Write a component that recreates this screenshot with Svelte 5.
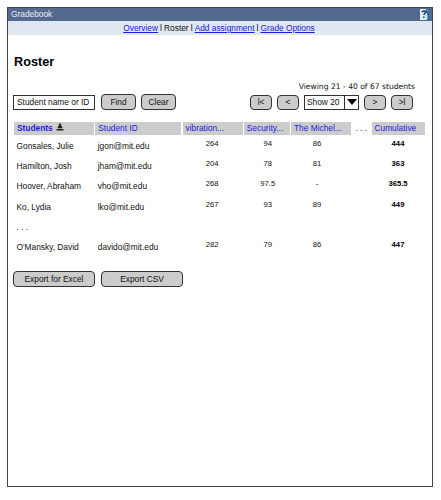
<script>
  const columns = ['Student ID', 'vibration...', 'Security...', 'The Michel...'];
  const rows = [
    ['Gonsales, Julie', 'jgon@mit.edu', '264', '94', '86', '444'],
    ['Hamilton, Josh', 'jham@mit.edu', '204', '78', '81', '363'],
    ['Hoover, Abraham', 'vho@mit.edu', '268', '97.5', '-', '365.5'],
    ['Ko, Lydia', 'lko@mit.edu', '267', '93', '89', '449'],
    ['. . .', '', '', '', '', ''],
    ["O'Mansky, David", 'davido@mit.edu', '282', '79', '86', '447']
  ];
</script>

<div class="window">
  <header>
    <span>Gradebook</span>
    <svg class="help" width="9" height="11" viewBox="0 0 9 11">
      <path d="M0 0h6l3 3v8H0z" fill="#dcebf5" />
      <path d="M6 0l3 3v8H7V4H5z" fill="#286b9e" />
      <path d="M2 3.2Q3 1.3 5 2.2Q6.3 3.3 4.4 4.8L3.9 6M3.8 7.5v1.4" fill="none" stroke="#17324f" stroke-width="1.4" />
      <path d="M5 7h3M5 9h3" stroke="#b9dcf0" stroke-width="1" />
    </svg>
  </header>
  <nav>
    <a href="#overview">Overview</a><span class="bar">l</span><span>Roster</span><span class="bar">l</span><a href="#add">Add assignment</a><span class="bar">l</span><a href="#options">Grade Options</a>
  </nav>
  <main>
    <h1>Roster</h1>
    <div class="viewing">Viewing 21 - 40 of 67 students</div>
    <div class="toolbar">
      <div class="field">Student name or ID</div>
      <button class="find">Find</button>
      <button class="clear">Clear</button>
      <div class="pager">
        <button>l&lt;</button>
        <button>&lt;</button>
        <div class="select">
          <span>Show 20</span>
          <i><svg width="10" height="6" viewBox="0 0 10 6"><path d="M0 0h10L5 6z" /></svg></i>
        </div>
        <button>&gt;</button>
        <button>&gt;l</button>
      </div>
    </div>

    <div class="row head">
      <div class="cell first">
        Students
        <svg width="8" height="8" viewBox="0 0 8 8"><path d="M4 0l1.2 1.5v1.2L6.3 4v1.2H1.7V4l1.1-1.3V1.5zM.5 5.9h7v1.6h-7z" fill="#222" /></svg>
      </div>
      {#each columns as column}
        <div class="cell">{column}</div>
      {/each}
      <div class="more">. . .</div>
      <div class="cell">Cumulative</div>
    </div>
    {#each rows as [name, id, a, b, c, total]}
      <div class="row body">
        <div class="name">{name}</div>
        <div class="id">{id}</div>
        <div class="num">{a}</div>
        <div class="num b">{b}</div>
        <div class="num c">{c}</div>
        <div></div>
        <div class="num total">{total}</div>
      </div>
    {/each}

    <div class="exports">
      <button>Export for Excel</button>
      <button>Export CSV</button>
    </div>
  </main>
</div>

<style>
  :global(body) {
    background: #fff;
  }
  .window {
    box-sizing: border-box;
    width: 426px;
    height: 480px;
    margin: 7px 0 0 7px;
    border: 1px solid #444;
    font: 8.35px/10px 'Liberation Sans', Arial, sans-serif;
    color: #111;
    white-space: nowrap;
  }
  header {
    display: flex;
    justify-content: space-between;
    height: 13px;
    padding: 0 3px 0 3px;
    background: #53698f;
    color: #e9edf5;
    line-height: 12px;
  }
  .help {
    margin-top: 1px;
  }
  nav {
    display: flex;
    justify-content: center;
    height: 14px;
    padding-right: 2px;
    background: #dfe7f1;
    line-height: 14px;
  }
  .bar {
    width: 6px;
    text-align: center;
  }
  a {
    color: #1a1ae0;
  }
  main {
    padding: 0 7px 0 6px;
  }
  h1 {
    margin: 19px 0 0;
    font-size: 12.7px;
    line-height: 16px;
    color: #000;
  }
  .viewing {
    margin: 12px 10px 0 0;
    text-align: right;
    font: 7.6px/10px 'DejaVu Sans', Verdana, sans-serif;
  }
  .toolbar {
    display: flex;
    align-items: center;
    height: 16px;
    margin-top: 2px;
  }
  button {
    box-sizing: border-box;
    height: 16px;
    padding: 0;
    border: 1px solid #333;
    border-radius: 4px;
    background: #ccc;
    color: #111;
    font: inherit;
    line-height: 14px;
  }
  .field {
    box-sizing: border-box;
    width: 82px;
    height: 15px;
    margin-left: -1px;
    padding-left: 3px;
    border: 1px solid #333;
    line-height: 13px;
  }
  .find {
    width: 35px;
    margin-left: 6px;
  }
  .clear {
    width: 35px;
    margin-left: 5px;
  }
  .pager {
    display: flex;
    align-items: center;
    gap: 5px;
    margin: 0 12px 0 auto;
  }
  .pager button {
    width: 22px;
    height: 15px;
    line-height: 13px;
  }
  .select {
    box-sizing: border-box;
    display: flex;
    width: 55px;
    height: 15px;
    border: 1px solid #333;
    line-height: 13px;
  }
  .select span {
    flex: 1;
    padding-left: 2px;
  }
  .select i {
    display: flex;
    align-items: center;
    justify-content: center;
    width: 13px;
    border-left: 1px solid #333;
  }
  .row {
    display: grid;
    grid-template-columns: 80px 86px 60px 46px 60px 18px 53px;
    column-gap: 1.25px;
  }
  .head {
    height: 13px;
    margin-top: 12px;
    line-height: 13px;
    color: #1a1ae0;
  }
  .cell {
    padding-left: 3px;
    background: #ccc;
  }
  .first {
    font-weight: bold;
  }
  .first svg {
    margin-left: 1px;
  }
  .more {
    text-align: center;
    color: #222;
  }
  .body {
    height: 20.2px;
    line-height: 23px;
  }
  .name,
  .id {
    padding-left: 2.5px;
  }
  .num {
    padding-right: 24px;
    text-align: right;
    font-size: 7.7px;
    line-height: 18px;
  }
  .num.b,
  .num.c,
  .num.total {
    padding: 0;
    text-align: center;
  }
  .num.b {
    padding-left: 2px;
  }
  .num.c {
    padding-right: 8px;
  }
  .total {
    font-weight: bold;
    color: #000;
  }
  .exports {
    display: flex;
    gap: 6px;
    margin: 15px 0 0 -1px;
  }
  .exports button {
    width: 82px;
  }
</style>
